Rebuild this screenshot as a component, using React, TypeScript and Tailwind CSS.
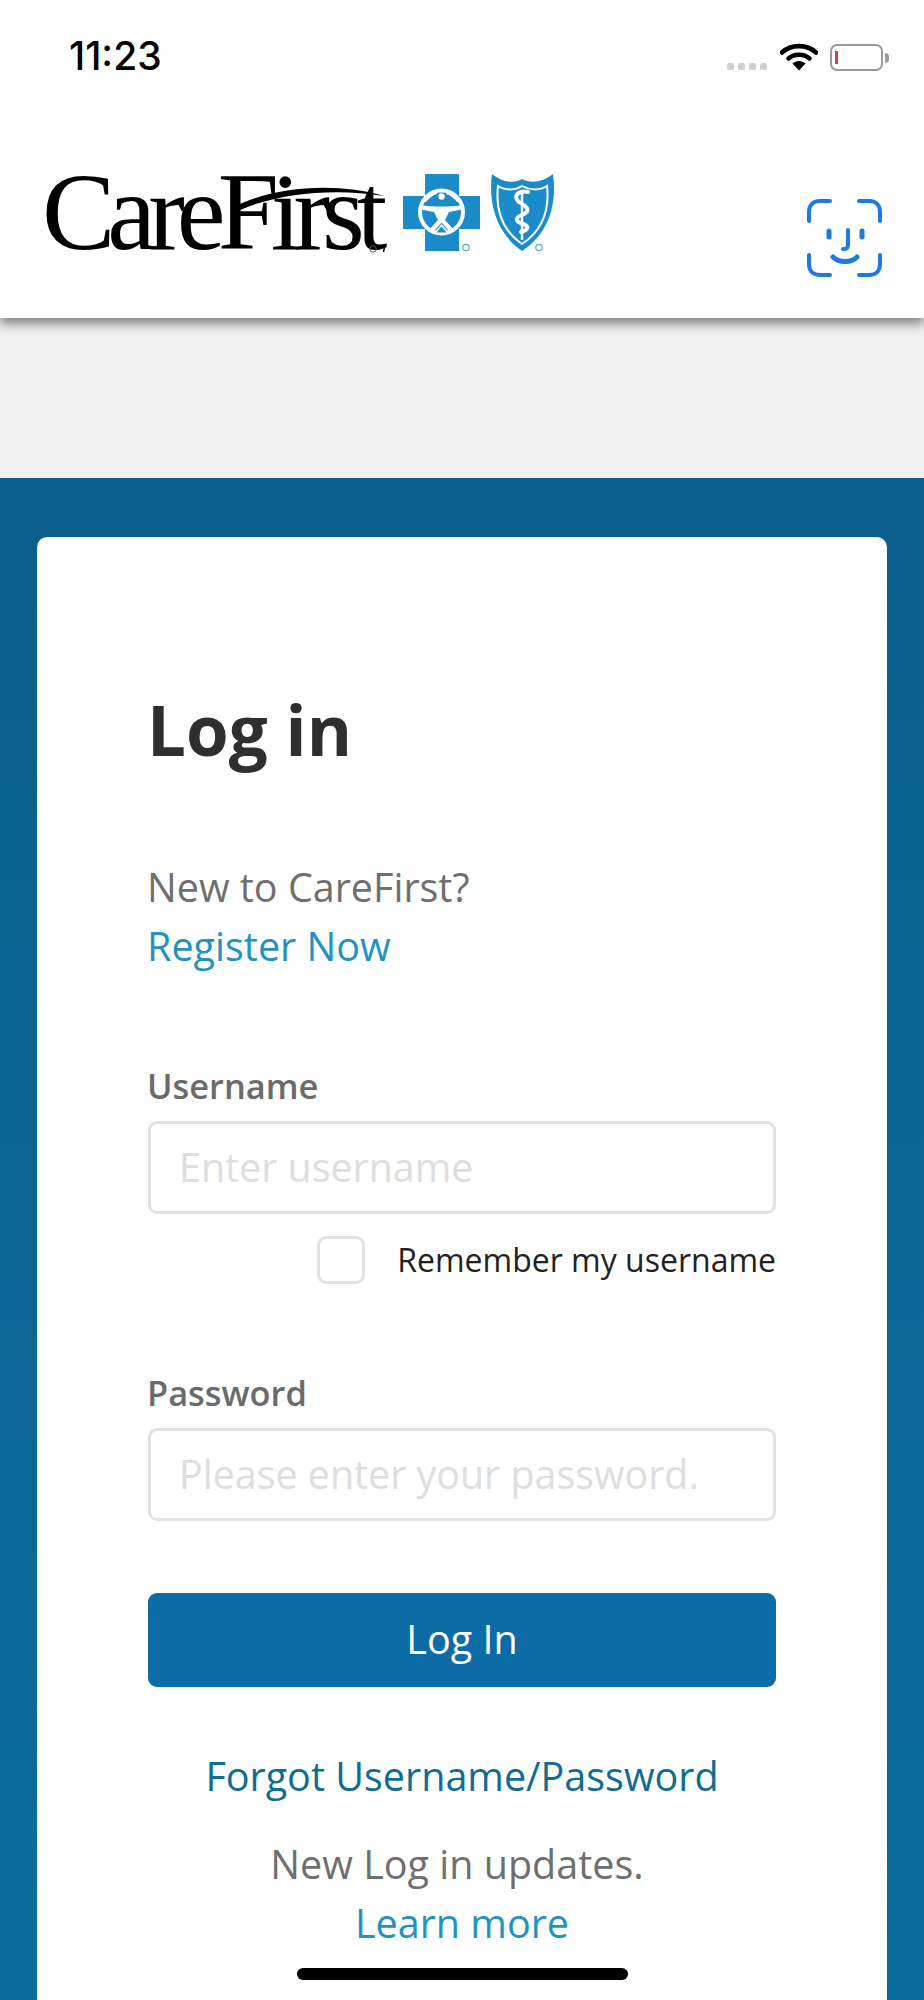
import React from "react";

const openSans = "font-['Open_Sans',sans-serif]";

function StatusIcons() {
  return (
    <div className="flex items-end">
      <div className="flex gap-[4px] mb-[1px]">
        <span className="w-[7px] h-[7px] rounded-[2px] bg-[#cfcfcf]"></span>
        <span className="w-[7px] h-[7px] rounded-[2px] bg-[#cfcfcf]"></span>
        <span className="w-[7px] h-[7px] rounded-[2px] bg-[#cfcfcf]"></span>
        <span className="w-[7px] h-[7px] rounded-[2px] bg-[#cfcfcf]"></span>
      </div>
      <svg width="38" height="28" viewBox="0 0 38 28" className="ml-[13px]">
        <path d="M2 9.5C11 1 27 1 36 9.5" fill="none" stroke="#000" strokeWidth="4.6" strokeLinecap="round" />
        <path d="M8.5 15.5C14 10.5 24 10.5 29.5 15.5" fill="none" stroke="#000" strokeWidth="4.4" strokeLinecap="round" />
        <path d="M12.5 20.5C16 17 22 17 25.5 20.5L19 27.5Z" fill="#000" />
      </svg>
      <div className="ml-[12px] flex items-center">
        <div className="w-[53px] h-[27px] rounded-[7px] border-[2px] border-[#9a9a9a] pl-[3px] py-[5px]">
          <div className="w-[3px] h-full bg-[#d9403a]"></div>
        </div>
        <div className="w-[4px] h-[10px] ml-[2px] rounded-r-full bg-[#9a9a9a]"></div>
      </div>
    </div>
  );
}

function CrossLogo() {
  return (
    <svg width="88" height="80" viewBox="0 0 88 80">
      <path d="M22 0H56V22H77V55H56V77H22V55H0V22H22Z" fill="#1b8bc9" />
      <circle cx="38.5" cy="38" r="23.5" fill="#fff" />
      <circle cx="38.5" cy="38" r="19.5" fill="#1b8bc9" />
      <g fill="#fff">
        <circle cx="38.5" cy="22.5" r="3.2" />
        <path d="M18 31C26 33 51 33 59 31L59 35.5L46 38L42 46L52 57L47.5 59L38.5 48.5L29.5 59L25 57L35 46L31 38L18 35.5Z" />
        <path d="M20 27C24 21 29 18 33 18L34 20C30 21 26 24 23 28Z" />
        <path d="M57 27C53 21 48 18 44 18L43 20C47 21 51 24 54 28Z" />
        <path d="M38.5 50L47 60H30Z" />
      </g>
      <path d="M38.5 52.5L43.5 58.5H33.5Z" fill="#1b8bc9" />
      <circle cx="63" cy="73.5" r="3.2" fill="none" stroke="#5aa5d2" strokeWidth="1.2" />
    </svg>
  );
}

function ShieldLogo() {
  return (
    <svg width="72" height="80" viewBox="0 0 72 80">
      <path d="M1 0C10 8 23 10 31 5C40 10 52 8 62 0C65 22 63 56 31 77C1 56-2 22 1 0Z" fill="#1b8bc9" />
      <path d="M7 12C15 17 25 16 31 12C38 16 48 17 56 12C58 30 55 54 31 70C8 54 5 30 7 12Z" fill="none" stroke="#fff" strokeWidth="2" />
      <path d="M31 17V66" stroke="#fff" strokeWidth="2.4" />
      <path d="M37 18C28 16 21 22 28 28C37 33 40 37 31 41C23 44 25 48 32 50C39 52 37 56 30 58" fill="none" stroke="#fff" strokeWidth="4" strokeLinecap="round" />
      <circle cx="48" cy="73.5" r="3.2" fill="none" stroke="#5aa5d2" strokeWidth="1.2" />
    </svg>
  );
}

function FaceId() {
  return (
    <svg width="76" height="78" viewBox="0 0 76 78" fill="none" stroke="#1f7ae0" strokeWidth="4" strokeLinecap="round">
      <path d="M2 22V13C2 6 6 2 13 2H23" />
      <path d="M52 2H62C69 2 73 6 73 13V22" />
      <path d="M2 56V65C2 72 6 76 13 76H23" />
      <path d="M52 76H62C69 76 73 72 73 65V56" />
      <path d="M22 32V38" strokeWidth="5" />
      <path d="M55 32V38" strokeWidth="5" />
      <path d="M41 31V46C41 49 39 50 36 50" />
      <path d="M26 58C32 64 44 64 50 58" strokeWidth="5" />
    </svg>
  );
}

function Field({ label, placeholder }: { label: string; placeholder: string }) {
  return (
    <div>
      <div className={`${openSans} text-[34.4px] leading-[44px] font-semibold text-[#6b6b6b] -ml-[1px]`}>{label}</div>
      <div className={`${openSans} mt-[13px] h-[93px] rounded-[9px] border-[3px] border-[#e2e2e2] pl-[28px] flex items-center text-[39.4px] text-[#dedede]`}>
        {placeholder}
      </div>
    </div>
  );
}

export default function App() {
  return (
    <div className="relative w-[924px] h-[2000px] overflow-hidden bg-[#f0f0f0]">
      <header className="relative h-[318px] bg-white shadow-[0_6px_10px_rgba(0,0,0,0.45)]">
        <div className="flex justify-between pl-[69px] pr-[35px] pt-[36px]">
          <span className="font-['Inter',sans-serif] text-[39px] leading-[40px] font-medium text-black">11:23</span>
          <div className="pt-[7px]">
            <StatusIcons />
          </div>
        </div>
        <div className="flex items-start mt-[98px] pl-[42px] pr-[41px]">
          <div className="relative w-[361px] h-[80px]">
            <span className="block font-['Liberation_Serif',serif] text-[110px] leading-[76px] tracking-[-8px] text-black">CareFirst</span>
            <svg width="160" height="30" viewBox="0 0 160 30" className="absolute left-[190px] top-[10px]">
              <path d="M0 24C40 2 105 -2 152 12C105 4 45 8 4 28Z" fill="#000" />
            </svg>
            <svg width="22" height="12" viewBox="0 0 22 12" className="absolute left-[326px] top-[69px]">
              <circle cx="5" cy="6" r="3.2" fill="none" stroke="#555" strokeWidth="1" />
              <path d="M17 2L15.5 9" stroke="#000" strokeWidth="1.4" />
            </svg>
          </div>
          <CrossLogo />
          <ShieldLogo />
          <div className="ml-auto mt-[25px]">
            <FaceId />
          </div>
        </div>
      </header>

      <div className="h-[160px]"></div>

      <main className="h-[1522px] px-[37px] pt-[59px] bg-gradient-to-b from-[#0a5f8c] to-[#0b6d9f]">
        <div className="h-[1500px] rounded-[10px] bg-white px-[111px] pt-[154px]">
          <h1 className={`${openSans} text-[69px] leading-[76px] font-bold text-[#2f2f2f] -ml-[1px]`}>Log in</h1>

          <p className={`${openSans} mt-[91px] -ml-[1px] text-[39.5px] leading-[59px] text-[#6f6f6f]`}>New to CareFirst?</p>
          <a className={`${openSans} block -ml-[1px] text-[39.5px] leading-[59px] text-[#2293c0]`}>Register Now</a>

          <div className="mt-[88px]">
            <Field label="Username" placeholder="Enter username" />
          </div>

          <div className="mt-[22px] flex items-center justify-end">
            <span className="w-[48px] h-[48px] rounded-[9px] border-[3px] border-[#e2e2e2]"></span>
            <span className={`${openSans} ml-[32px] text-[32px] leading-[48px] text-[#222]`}>Remember my username</span>
          </div>

          <div className="mt-[87px]">
            <Field label="Password" placeholder="Please enter your password." />
          </div>

          <button className={`${openSans} mt-[72px] w-full h-[94px] rounded-[9px] bg-[#0b6ca6] text-[39.5px] text-white`}>Log In</button>

          <a className={`${openSans} block mt-[60px] text-center text-[39.5px] leading-[59px] text-[#0f6d94]`}>Forgot Username/Password</a>
          <p className={`${openSans} mt-[29px] pr-[10px] text-center text-[39.5px] leading-[59px] text-[#6f6f6f]`}>New Log in updates.</p>
          <a className={`${openSans} block text-center text-[39.5px] leading-[59px] text-[#2293c0]`}>Learn more</a>
        </div>
      </main>

      <div className="absolute left-[297px] top-[1968px] w-[331px] h-[12px] rounded-full bg-black"></div>
    </div>
  );
}
